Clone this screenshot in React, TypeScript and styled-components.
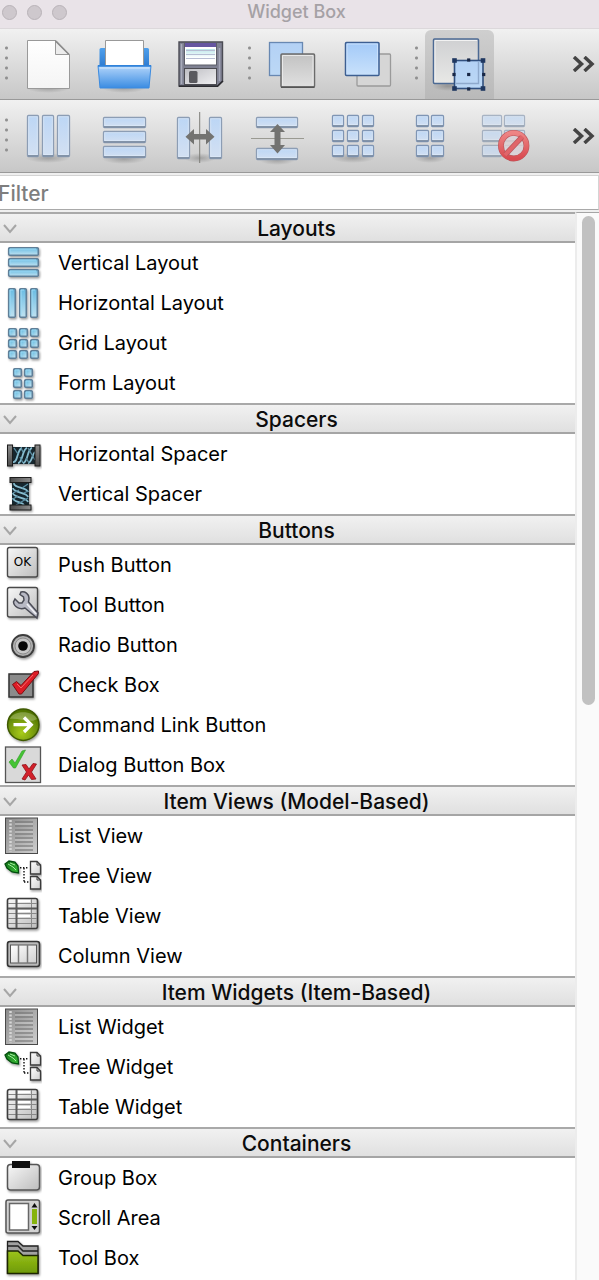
import React from 'react';
import styled, { createGlobalStyle } from 'styled-components';

const GlobalStyle = createGlobalStyle`
  *, *::before, *::after { box-sizing: border-box; }
  body { margin: 0; background: #fff; }
  body, button, input { font-family: Inter, "Liberation Sans", sans-serif; }
  ul { list-style: none; margin: 0; padding: 0; }
  button { appearance: none; border: 0; margin: 0; padding: 0; background: none; color: inherit; }
  svg { display: block; flex: none; }
`;

const Window = styled.main`
  display: flex;
  flex-direction: column;
  height: 100vh;
  overflow: hidden;
  background: #fff;
`;

const TitleBar = styled.header`
  display: grid;
  grid-template-columns: 80px 1fr 80px;
  align-items: center;
  flex: none;
  height: 29px;
  padding-bottom: 4px;
  background: #e9e3e8;
  border-bottom: 1px solid #dcd8db;
`;

const WindowControls = styled.div`
  display: flex;
  gap: 10px;
  padding-left: 2px;
`;

const WindowDot = styled.button`
  width: 15px;
  height: 15px;
  border: 1px solid #b9b3b8;
  border-radius: 50%;
  background: #cec8cd;
`;

const Title = styled.h1`
  margin: 0;
  font-size: 18px;
  line-height: 24px;
  font-weight: 500;
  text-align: center;
  color: #a5a1a5;
  padding-right: 6px;
`;

const ToolBar = styled.div<{ $height: number }>`
  display: flex;
  align-items: stretch;
  gap: 7px;
  flex: none;
  height: ${(p) => p.$height}px;
  background: linear-gradient(#f1f1f1, #c7c7c7);
  border-bottom: 1px solid #999;
`;

const Grip = styled.span`
  align-self: center;
  flex: none;
  width: 8px;
  height: 43px;
  background: radial-gradient(circle, #909090 0 1px, transparent 2px) right top / 3px 10px repeat-y;
`;

const ToolButton = styled.button<{ $checked?: boolean }>`
  flex: none;
  width: 69px;
  margin-top: 1px;
  border-radius: 6px 6px 0 0;
  background: ${(p) => (p.$checked ? 'linear-gradient(#cfcfcf, #b9b9b9)' : 'none')};
`;

const MoreButton = styled.button`
  display: flex;
  align-items: center;
  margin-left: auto;
  padding-right: 4px;
`;

const FilterBar = styled.div`
  flex: none;
  padding: 2px 0;
  background: #efefef;
`;

const FilterInput = styled.input`
  display: block;
  width: 100%;
  height: 35px;
  padding: 2px 0 0;
  text-indent: -2px;
  border: 1px solid #d4d4d4;
  border-left: 0;
  border-bottom-color: #a9a9a9;
  border-radius: 0;
  outline: 0;
  background: #fff;
  font-size: 21px;
  font-weight: 500;
  &::placeholder { color: #7e7e7e; opacity: 1; }
`;

const Body = styled.div`
  display: flex;
  flex: 1;
  min-height: 0;
`;

const Sections = styled.div`
  flex: 1;
  min-width: 0;
  overflow: hidden;
`;

const SectionHeader = styled.button`
  display: grid;
  grid-template-columns: 16px 1fr;
  align-items: center;
  width: 100%;
  height: 31px;
  padding: 2px 0 0 2px;
  border-top: 2px solid #a9a9a9;
  border-bottom: 2px solid #a5a5a5;
  background: linear-gradient(#f1f1f1, #e0e0e0);
`;

const SectionTitle = styled.span`
  font-size: 21px;
  line-height: 24px;
  font-weight: 500;
  color: #0c0c0c;
  text-align: center;
`;

const Row = styled.li`
  display: flex;
  align-items: center;
  gap: 16px;
  height: 40px;
  font-size: 20px;
  line-height: 24px;
  color: #000;
`;

const ScrollTrack = styled.div`
  flex: none;
  width: 24px;
  padding: 3px 4px 0 5px;
  background: #fafafa;
  border-left: 2px solid #ececec;
  border-top: 1px solid #a5a5a5;
`;

const ScrollThumb = styled.div`
  height: 46%;
  border-radius: 7px;
  background: #c1c1c1;
`;

const Defs = styled.svg`
  position: absolute;
`;

type Box = [number, number, number, number];

function SharedDefs() {
  const grad = (id: string, a: string, b: string) => (
    <linearGradient id={id} x1="0" y1="0" x2="0" y2="1">
      <stop offset="0" stopColor={a} />
      <stop offset="1" stopColor={b} />
    </linearGradient>
  );
  const diag = (id: string, a: string, b: string) => (
    <linearGradient id={id} x1="0" y1="0" x2="1" y2="1">
      <stop offset="0" stopColor={a} />
      <stop offset="1" stopColor={b} />
    </linearGradient>
  );
  return (
    <Defs width="0" height="0" aria-hidden="true">
      <defs>
        {grad('pale', '#bcd6f5', '#d3e0f2')}
        {grad('paleBlue', '#b3d1f5', '#bcd8f5')}
        {grad('sky', '#a3caf8', '#c9e1fb')}
        {grad('paper', '#ffffff', '#f4f4f4')}
        {grad('tray', '#b4d6fb', '#3a8ce2')}
        {grad('trayBack', '#4fa0ec', '#2774cc')}
        {grad('slab', '#c2c2c2', '#e0e0e0')}
        {grad('canvas', '#cfd0d2', '#e8e8e6')}
        {grad('label', '#8fd6dc', '#ffffff')}
        {grad('ban', '#ee8585', '#d94a50')}
        {grad('aqua', '#68bbe2', '#c0e2f1')}
        {grad('lime', '#9cc41c', '#6e9a05')}
        {grad('steelV', '#8d8d8d', '#4c4c4c')}
        {diag('aquaDiag', '#4fb0da', '#d3ebf5')}
        {diag('metal', '#f8f8f8', '#bdbdbd')}
        {diag('sheet', '#8a8a8a', '#cfcfcf')}
        {diag('page', '#ffffff', '#cfcfcf')}
        {diag('leaf', '#0c6a14', '#3fc63d')}
        {diag('shutter', '#bdbdc2', '#f0f0f2')}
        <radialGradient id="orb" cx=".45" cy=".75" r=".7">
          <stop offset="0" stopColor="#a9cc1c" />
          <stop offset="1" stopColor="#4f7400" />
        </radialGradient>
        <radialGradient id="floor">
          <stop offset="0" stopColor="#000" stopOpacity=".22" />
          <stop offset="1" stopColor="#000" stopOpacity="0" />
        </radialGradient>
        <filter id="drop" x="-20%" y="-20%" width="150%" height="150%">
          <feDropShadow dx="1" dy="1.5" stdDeviation="1" floodOpacity=".4" />
        </filter>
      </defs>
    </Defs>
  );
}

/* ---------- toolbar drawings ---------- */

function Plates({ boxes, fill = 'url(#pale)', stroke = '#8c9db4' }: { boxes: Box[]; fill?: string; stroke?: string }) {
  return (
    <g>
      {boxes.map(([x, y, w, h]) => (
        <g key={`${x}-${y}`}>
          <rect x={x + 0.5} y={y + 0.5} width={w - 1} height={h - 1} rx="1" fill={fill} stroke={stroke} strokeWidth="1.3" />
          <path d={`M${x + 1} ${y + h - 1.3}H${x + w - 1}`} stroke="#77879d" strokeWidth="1.4" />
          <rect x={x + 1.7} y={y + 1.7} width={w - 3.4} height={h - 4} fill="none" stroke="#e4effb" strokeOpacity=".6" />
        </g>
      ))}
    </g>
  );
}

const Floor = ({ cx, cy, rx = 22 }: { cx: number; cy: number; rx?: number }) => (
  <ellipse cx={cx} cy={cy} rx={rx} ry="5" fill="url(#floor)" />
);

const cells = (xs: number[], w: number): Box[] =>
  [115, 130, 145].flatMap((y) => xs.map((x): Box => [x, y, w, 12]));

const fileTools = [
  {
    label: 'New form',
    art: (
      <>
        <Floor cx={48} cy={88} />
        <path d="M27.5 40.5H56L69.500 54.500V88.500H27.500Z" fill="url(#paper)" stroke="#999" />
        <path d="M55.500 41V54.500H69Z" fill="#ececec" stroke="#999" />
        <path d="M55.500 41L69 54.500" stroke="#8a8a8a" strokeWidth="1.4" />
      </>
    ),
  },
  {
    label: 'Open form',
    art: (
      <>
        <Floor cx={124} cy={88} />
        <rect x="99.500" y="48" width="49.500" height="22" rx="1.5" fill="url(#trayBack)" />
        <path d="M105.500 68V40.500H143.500V68" fill="#fff" stroke="#999" />
        <path d="M98 65.500H151L149 88H100Z" fill="url(#tray)" stroke="#3c8be0" />
        <path d="M98 66H151" stroke="#2b7fd8" strokeWidth="1.6" />
        <path d="M99.500 68H149.500" stroke="#d6eafd" strokeWidth="1.2" />
      </>
    ),
  },
  {
    label: 'Save form',
    art: (
      <>
        <path d="M179 42H222.500V81L217.500 86H179Z" fill="#7f8192" stroke="#4b4c54" strokeWidth="1.400" />
        <path d="M181.500 44V84" stroke="#a9acbb" strokeWidth="1.500" />
        <path d="M219.500 48V81" stroke="#a4a7b8" strokeWidth="1.500" />
        <rect x="184.500" y="43" width="32" height="22" fill="#fff" stroke="#5d5e68" />
        <rect x="185" y="43" width="31" height="4" fill="#6555a0" />
        <rect x="186" y="49" width="29" height="9" fill="url(#label)" opacity=".6" />
        <path d="M186 50.500H215M186 54.500H215M186 58.500H215" stroke="#b6bdd3" />
        <rect x="184.500" y="68.500" width="32" height="16" fill="url(#shutter)" stroke="#4c4c52" />
        <rect x="189" y="71" width="8.500" height="12" rx="1.500" fill="#5a5a5f" />
        <path d="M179 86.300H217.500L223 81" fill="none" stroke="#2b2b30" strokeWidth="1.600" />
      </>
    ),
  },
];

const orderTools = [
  {
    label: 'Send to back',
    art: (
      <>
        <rect x="269.500" y="42.500" width="33" height="33" fill="url(#paleBlue)" stroke="#6888b2" strokeWidth="1.3" />
        <rect x="281" y="54" width="33.500" height="33" rx="1" fill="url(#slab)" stroke="#6b6b6b" strokeWidth="1.5" />
        <path d="M282.500 85.500V55.500H313V85.500" fill="none" stroke="#e9e9e9" />
        <path d="M281 87.200H314.500" stroke="#555" strokeWidth="1.4" />
      </>
    ),
  },
  {
    label: 'Bring to front',
    art: (
      <>
        <rect x="357" y="54" width="33.500" height="32" rx="1" fill="#d6d6d6" stroke="#9a9a9a" strokeWidth="1.3" />
        <rect x="345.500" y="42.500" width="33.500" height="33" rx="1" fill="url(#sky)" stroke="#3d5f92" strokeWidth="1.5" />
        <path d="M347 74V44H377.500V74" fill="none" stroke="#c9e0fb" />
      </>
    ),
  },
];

const modeTools = [
  {
    label: 'Edit widgets',
    checked: true,
    art: (
      <>
        <Floor cx={448} cy={86} rx={16} />
        <rect x="433.500" y="39" width="45" height="44.500" rx="1" fill="url(#canvas)" stroke="#4c6a94" strokeWidth="1.5" />
        <path d="M435 82V40.500H477" fill="none" stroke="#f2f2f2" />
        <rect x="454.500" y="60.500" width="28.500" height="28" fill="url(#paleBlue)" stroke="#31507f" strokeWidth="1.6" />
        <path d="M478.500 62V83.500H456" fill="none" stroke="#8ea9cc" strokeWidth="1.4" />
        {[454.5, 483].map((x) => [60.5, 88.5].map((y) => (
          <rect key={`${x}${y}`} x={x - 2.3} y={y - 2.3} width="4.600" height="4.600" fill="#1f3760" />
        )))}
        {[[468.7, 60], [468.7, 89], [454, 74.5], [483.7, 74.5], [468.7, 74.5]].map(([x, y]) => (
          <rect key={`${x}${y}`} x={x - 1.6} y={y - 1.6} width="3.200" height="3.200" fill="#182746" />
        ))}
      </>
    ),
  },
];

const layoutTools = [
  {
    label: 'Lay out horizontally',
    art: (<><Floor cx={48} cy={158} /><Plates boxes={[[27, 115, 12, 42], [42, 115, 12, 42], [57, 115, 13, 42]]} /></>),
  },
  {
    label: 'Lay out vertically',
    art: (<><Floor cx={124} cy={159} /><Plates boxes={[[103, 117, 43, 11], [103, 131, 43, 12], [103, 146, 43, 12]]} /></>),
  },
  {
    label: 'Lay out horizontally in splitter',
    art: (
      <>
        <Floor cx={200} cy={158} rx={16} />
        <Plates boxes={[[177, 117, 13, 42], [209, 117, 13, 42]]} />
        <path d="M199.700 112V163" stroke="#7d7d78" />
        <path d="M185.500 136.700L194 129V134H206V129L214.500 136.700L206 144.500V139.500H194V144.500Z" fill="#737371" />
      </>
    ),
  },
  {
    label: 'Lay out vertically in splitter',
    art: (
      <>
        <Floor cx={277} cy={160} rx={18} />
        <Plates boxes={[[256, 117, 42, 11], [256, 148, 42, 12]]} />
        <path d="M251 138.500H304" stroke="#9a9a92" />
        <path d="M277.500 124L285 132H280.500V145H285L277.500 153.500L270 145H274.500V132H270Z" fill="#737371" />
      </>
    ),
  },
  {
    label: 'Lay out in a grid',
    art: (<><Floor cx={353} cy={158} /><Plates boxes={cells([332, 347, 362], 12)} stroke="#7f95b4" /></>),
  },
  {
    label: 'Lay out in a form',
    art: (<><Floor cx={430} cy={158} rx={16} /><Plates boxes={cells([416, 431], 13)} stroke="#7f95b4" /></>),
  },
  {
    label: 'Break layout',
    art: (
      <>
        <g opacity=".7"><Plates boxes={[...cells([482], 20), ...cells([504], 21)]} /></g>
        <circle cx="513.700" cy="145.700" r="12.800" fill="#dccfd2" fillOpacity=".8" />
        <circle cx="513.700" cy="145.700" r="12.800" fill="none" stroke="#b9555a" strokeWidth="5.800" />
        <circle cx="513.700" cy="145.700" r="12.800" fill="none" stroke="url(#ban)" strokeWidth="4.600" />
        <path d="M505.500 154.500L522 137" stroke="#b9555a" strokeWidth="5.400" />
        <path d="M505 155L522.500 136.500" stroke="#e0656a" strokeWidth="4" />
      </>
    ),
  },
];

/* ---------- widget drawings, each on a 42 x 40 field ---------- */

function Glass({ boxes }: { boxes: Box[] }) {
  return (
    <g filter="url(#drop)">
      {boxes.map(([x, y, w, h]) => (
        <g key={`${x}-${y}`}>
          <rect x={x + 0.7} y={y + 0.7} width={w - 1.4} height={h - 1.4} rx="1" fill={w === h ? 'url(#aquaDiag)' : 'url(#aqua)'} stroke="#5f7e97" strokeWidth="1.6" />
          <path d={`M${x + 2} ${y + h - 2.5}V${y + 2}H${x + w - 3}`} fill="none" stroke="#9bdaf5" strokeWidth="1" />
        </g>
      ))}
    </g>
  );
}

const glassCells = (xs: number[]): Box[] => [5, 16, 27].flatMap((y) => xs.map((x): Box => [x, y, 9, 9]));

const Coil = () => (
  <g fill="none">
    <path d="M13 13H35V30H13Z" fill="#17262e" />
    <path d="M13 28C18 29 17 15 22 14M18 29C23 29 22 15 27 14M23 29C28 29 27 15 32 14M28 29C32 29 32 20 35 18" stroke="#86bccf" strokeWidth="1.800" />
    <path d="M14 14L18 20M20 23L23 29M21 14L23 18M26 24L29 29M28 14L35 26" stroke="#5c8fa4" strokeWidth="1.300" />
    <rect x="7.500" y="11" width="5" height="21" fill="url(#steelV)" stroke="#1b1b1b" />
    <rect x="35" y="11" width="5" height="21" fill="url(#steelV)" stroke="#1b1b1b" />
  </g>
);

const ListArt = (
  <g>
    <rect x="5.500" y="2" width="32" height="35.500" fill="url(#sheet)" stroke="#4a4a4a" />
    <path d="M10.500 4V36" stroke="#d6d6d6" strokeWidth="2.500" strokeDasharray="2 1.500" />
    <path d="M15 6H33M15 10H33M15 14H33M15 18H33M15 22H33M15 26H33M15 30H33M15 34H33" stroke="#6c6c6c" strokeWidth="1.200" />
    <path d="M15 8H33M15 16H33M15 24H33M15 32H33" stroke="#d3d3d3" strokeOpacity=".7" />
  </g>
);

const TreeArt = (
  <g>
    <g filter="url(#drop)">
      <path d="M5 8L9 5L15 6L18 10L18.500 17L12 16L7 12Z" fill="url(#leaf)" stroke="#064d0c" strokeWidth="1.300" />
      <path d="M8 8L13 11L16 14M10 7L15 9" stroke="#a6efa0" fill="none" />
    </g>
    <path d="M20 11.700H29M24 12V26M24 26H29" stroke="#111" strokeWidth="1.400" strokeDasharray="1.400 1.600" fill="none" />
    {[5, 20].map((y) => (
      <g key={y} filter="url(#drop)">
        <path d={`M30.500 ${y + 0.5}H37L40.500 ${y + 4}V${y + 13}H30.500Z`} fill="url(#page)" stroke="#3a3a3a" strokeWidth="1.300" />
        <path d={`M37 ${y + 0.5}V${y + 4}H40.500`} fill="none" stroke="#3a3a3a" />
      </g>
    ))}
  </g>
);

const TableArt = (
  <g filter="url(#drop)">
    <rect x="7.500" y="2.500" width="30" height="30" rx="2" fill="url(#metal)" stroke="#3d3d3d" strokeWidth="1.600" />
    <path d="M8 7.500H37M8 17.500H37M8 22.500H37M8 27.500H37M31.500 3V32" stroke="#888" />
    <path d="M8 12.500H37M16.500 3V32" stroke="#5a5a5a" strokeWidth="2" />
    <path d="M18 5H30M18 15H30M18 20H30" stroke="#fff" strokeWidth="2" />
  </g>
);

const art: Record<string, React.ReactNode> = {
  vertical: <Glass boxes={[[8, 4, 31, 9], [8, 15, 31, 9], [8, 26, 31, 8]]} />,
  horizontal: <Glass boxes={[[8, 5, 8, 30], [19, 5, 8, 30], [30, 5, 8, 30]]} />,
  grid: <Glass boxes={glassCells([8, 19, 30])} />,
  form: <Glass boxes={glassCells([13, 24])} />,
  hspacer: <g filter="url(#drop)"><Coil /></g>,
  vspacer: <g filter="url(#drop)"><g transform="matrix(0 1 -1 0 42 -4)"><Coil /></g></g>,
  push: (
    <g>
      <rect x="7.500" y="2.500" width="30" height="29.500" rx="2" fill="url(#metal)" stroke="#4a4a4a" strokeWidth="1.400" filter="url(#drop)" />
      <text x="22.500" y="21" textAnchor="middle" fontFamily="DejaVu Sans, sans-serif" fontSize="12" fill="#000">OK</text>
    </g>
  ),
  tool: (
    <g>
      <rect x="7.500" y="2.500" width="30" height="29.500" rx="2" fill="url(#metal)" stroke="#4a4a4a" strokeWidth="1.400" filter="url(#drop)" />
      <path d="M21 7C25 6 29 9 29 13C29 15 28.500 16 28.500 17L38 28L37 33L25 23C20 25 14 22 13.500 17L15 14L19 18H22L24 15L23.500 12L20 9.500Z" fill="#b8b9c4" stroke="#4b4c56" strokeWidth="1.500" />
      <path d="M27 19L36 29" stroke="#f2f2f6" strokeWidth="1.600" />
    </g>
  ),
  radio: (
    <g>
      <circle cx="23" cy="21" r="11" fill="#b0b0b0" stroke="#3c3c3c" strokeWidth="1.800" filter="url(#drop)" />
      <circle cx="23" cy="21" r="8" fill="#c6c6c6" stroke="#8c8c8c" />
      <circle cx="23" cy="21" r="4.800" fill="#080808" />
    </g>
  ),
  check: (
    <g filter="url(#drop)">
      <rect x="9" y="9" width="24" height="23" fill="#8b8b8b" stroke="#333" strokeWidth="1.500" />
      <path d="M12.500 19.500L16.500 16.500L21 20.500L34 6.500L38.500 6V8.500L21.500 29L19 29Z" fill="#dc1f26" stroke="#7d0c10" />
      <path d="M17 19L21 23L33 10" fill="none" stroke="#f4686c" />
    </g>
  ),
  command: (
    <g>
      <circle cx="23.300" cy="19.700" r="15.700" fill="url(#orb)" stroke="#3f5a06" strokeWidth="1.500" filter="url(#drop)" />
      <path d="M10 14C13 5 33 5 37 14C30 19 17 12 10 14Z" fill="#fff" fillOpacity=".25" />
      <path d="M13.500 19.700H31M24 12.500L31.200 19.700L24 27" fill="none" stroke="#fff" strokeWidth="3.300" />
    </g>
  ),
  dialog: (
    <g>
      <rect x="5.500" y="2" width="35" height="35.500" fill="#d9d9d9" stroke="#555" strokeWidth="1.300" />
      <path d="M9 17L12 14L15 18L22 6L25.500 5L15.500 23H13.500Z" fill="#44c433" stroke="#2f9a25" strokeWidth=".6" />
      <path d="M22 20L26 19.500L29 24L33 18.500L36.500 19L31.500 27L36 34L31.500 34.500L28.500 30L25 35L22 34L26.500 27Z" fill="#d2202a" stroke="#8f1018" strokeWidth=".8" />
    </g>
  ),
  list: ListArt,
  tree: TreeArt,
  table: TableArt,
  column: (
    <g filter="url(#drop)">
      <rect x="7.500" y="5.500" width="32" height="25" rx="2.500" fill="#bababa" stroke="#343434" strokeWidth="1.600" />
      <rect x="10.500" y="9" width="26" height="18" fill="url(#page)" stroke="#555" />
      <path d="M18.500 9V27M27.500 9V27" stroke="#777" strokeWidth="1.500" />
    </g>
  ),
  group: (
    <g filter="url(#drop)">
      <rect x="7.500" y="6.500" width="32" height="25.500" rx="3" fill="url(#metal)" stroke="#555" strokeWidth="1.500" />
      <rect x="12" y="3" width="18" height="7" fill="#080808" />
    </g>
  ),
  scroll: (
    <g filter="url(#drop)">
      <rect x="6" y="2" width="33.500" height="33" rx="2" fill="#d2d2d2" stroke="#555" strokeWidth="1.500" />
      <rect x="9.500" y="5.500" width="19" height="26.500" fill="#fff" stroke="#666" strokeWidth="1.500" />
      <rect x="32" y="11" width="5" height="15" fill="#86b30c" />
      <path d="M31.500 9.500L34.500 5L37.500 9.500ZM31.500 28L34.500 32L37.500 28Z" fill="#111" />
    </g>
  ),
  toolbox: (
    <g filter="url(#drop)">
      <path d="M7.500 3.500H18L23 8H38V35H7.500Z" fill="#a2a2a2" stroke="#222" strokeWidth="1.300" />
      <path d="M7.500 8H18L23 13H38" fill="none" stroke="#222" strokeWidth="1.500" />
      <path d="M7.500 13H18L23 17.500H38V35.500H7.500Z" fill="url(#lime)" stroke="#1d2605" strokeWidth="1.500" />
    </g>
  ),
};

const sections: { title: string; rows: [string, string][] }[] = [
  { title: 'Layouts', rows: [['Vertical Layout', 'vertical'], ['Horizontal Layout', 'horizontal'], ['Grid Layout', 'grid'], ['Form Layout', 'form']] },
  { title: 'Spacers', rows: [['Horizontal Spacer', 'hspacer'], ['Vertical Spacer', 'vspacer']] },
  {
    title: 'Buttons',
    rows: [['Push Button', 'push'], ['Tool Button', 'tool'], ['Radio Button', 'radio'], ['Check Box', 'check'], ['Command Link Button', 'command'], ['Dialog Button Box', 'dialog']],
  },
  { title: 'Item Views (Model-Based)', rows: [['List View', 'list'], ['Tree View', 'tree'], ['Table View', 'table'], ['Column View', 'column']] },
  { title: 'Item Widgets (Item-Based)', rows: [['List Widget', 'list'], ['Tree Widget', 'tree'], ['Table Widget', 'table']] },
  { title: 'Containers', rows: [['Group Box', 'group'], ['Scroll Area', 'scroll'], ['Tool Box', 'toolbox']] },
];

type Tool = { label: string; art: React.ReactNode; checked?: boolean };

function ToolGroup({ tools, left, top, height }: { tools: Tool[]; left: number; top: number; height: number }) {
  return (
    <>
      <Grip />
      {tools.map((t, i) => (
        <ToolButton key={t.label} type="button" aria-label={t.label} aria-pressed={t.checked} $checked={t.checked}>
          <svg width="69" height={height} viewBox={`${left + i * 76} ${top} 69 ${height}`} aria-hidden="true">{t.art}</svg>
        </ToolButton>
      ))}
    </>
  );
}

function More() {
  return (
    <MoreButton type="button" aria-label="More tools">
      <svg width="23" height="16" viewBox="0 0 23 16" fill="none" stroke="#444" strokeWidth="3.500" aria-hidden="true">
        <path d="M2 1L9.500 8L2 15M12.500 1L20 8L12.500 15" />
      </svg>
    </MoreButton>
  );
}

export default function App() {
  return (
    <Window>
      <GlobalStyle />
      <SharedDefs />
      <TitleBar>
        <WindowControls>
          <WindowDot type="button" aria-label="Close" />
          <WindowDot type="button" aria-label="Minimize" />
          <WindowDot type="button" aria-label="Zoom" />
        </WindowControls>
        <Title>Widget Box</Title>
      </TitleBar>
      <ToolBar $height={71} role="toolbar" aria-label="File and edit">
        <ToolGroup tools={fileTools} left={15} top={30} height={69} />
        <ToolGroup tools={orderTools} left={258} top={30} height={69} />
        <ToolGroup tools={modeTools} left={425} top={30} height={69} />
        <More />
      </ToolBar>
      <ToolBar $height={73} role="toolbar" aria-label="Layout">
        <ToolGroup tools={layoutTools} left={15} top={101} height={71} />
        <More />
      </ToolBar>
      <FilterBar>
        <FilterInput type="text" placeholder="Filter" aria-label="Filter" />
      </FilterBar>
      <Body>
        <Sections>
          {sections.map((s) => (
            <section key={s.title}>
              <SectionHeader type="button" aria-expanded="true">
                <svg width="16" height="10" viewBox="0 0 16 10" fill="none" stroke="#a6a6a6" strokeWidth="2" aria-hidden="true">
                  <path d="M2 1L8 8L14 1" />
                </svg>
                <SectionTitle>{s.title}</SectionTitle>
              </SectionHeader>
              <ul>
                {s.rows.map(([name, icon]) => (
                  <Row key={name}>
                    <svg width="42" height="40" viewBox="0 0 42 40" aria-hidden="true">{art[icon]}</svg>
                    {name}
                  </Row>
                ))}
              </ul>
            </section>
          ))}
        </Sections>
        <ScrollTrack>
          <ScrollThumb />
        </ScrollTrack>
      </Body>
    </Window>
  );
}
